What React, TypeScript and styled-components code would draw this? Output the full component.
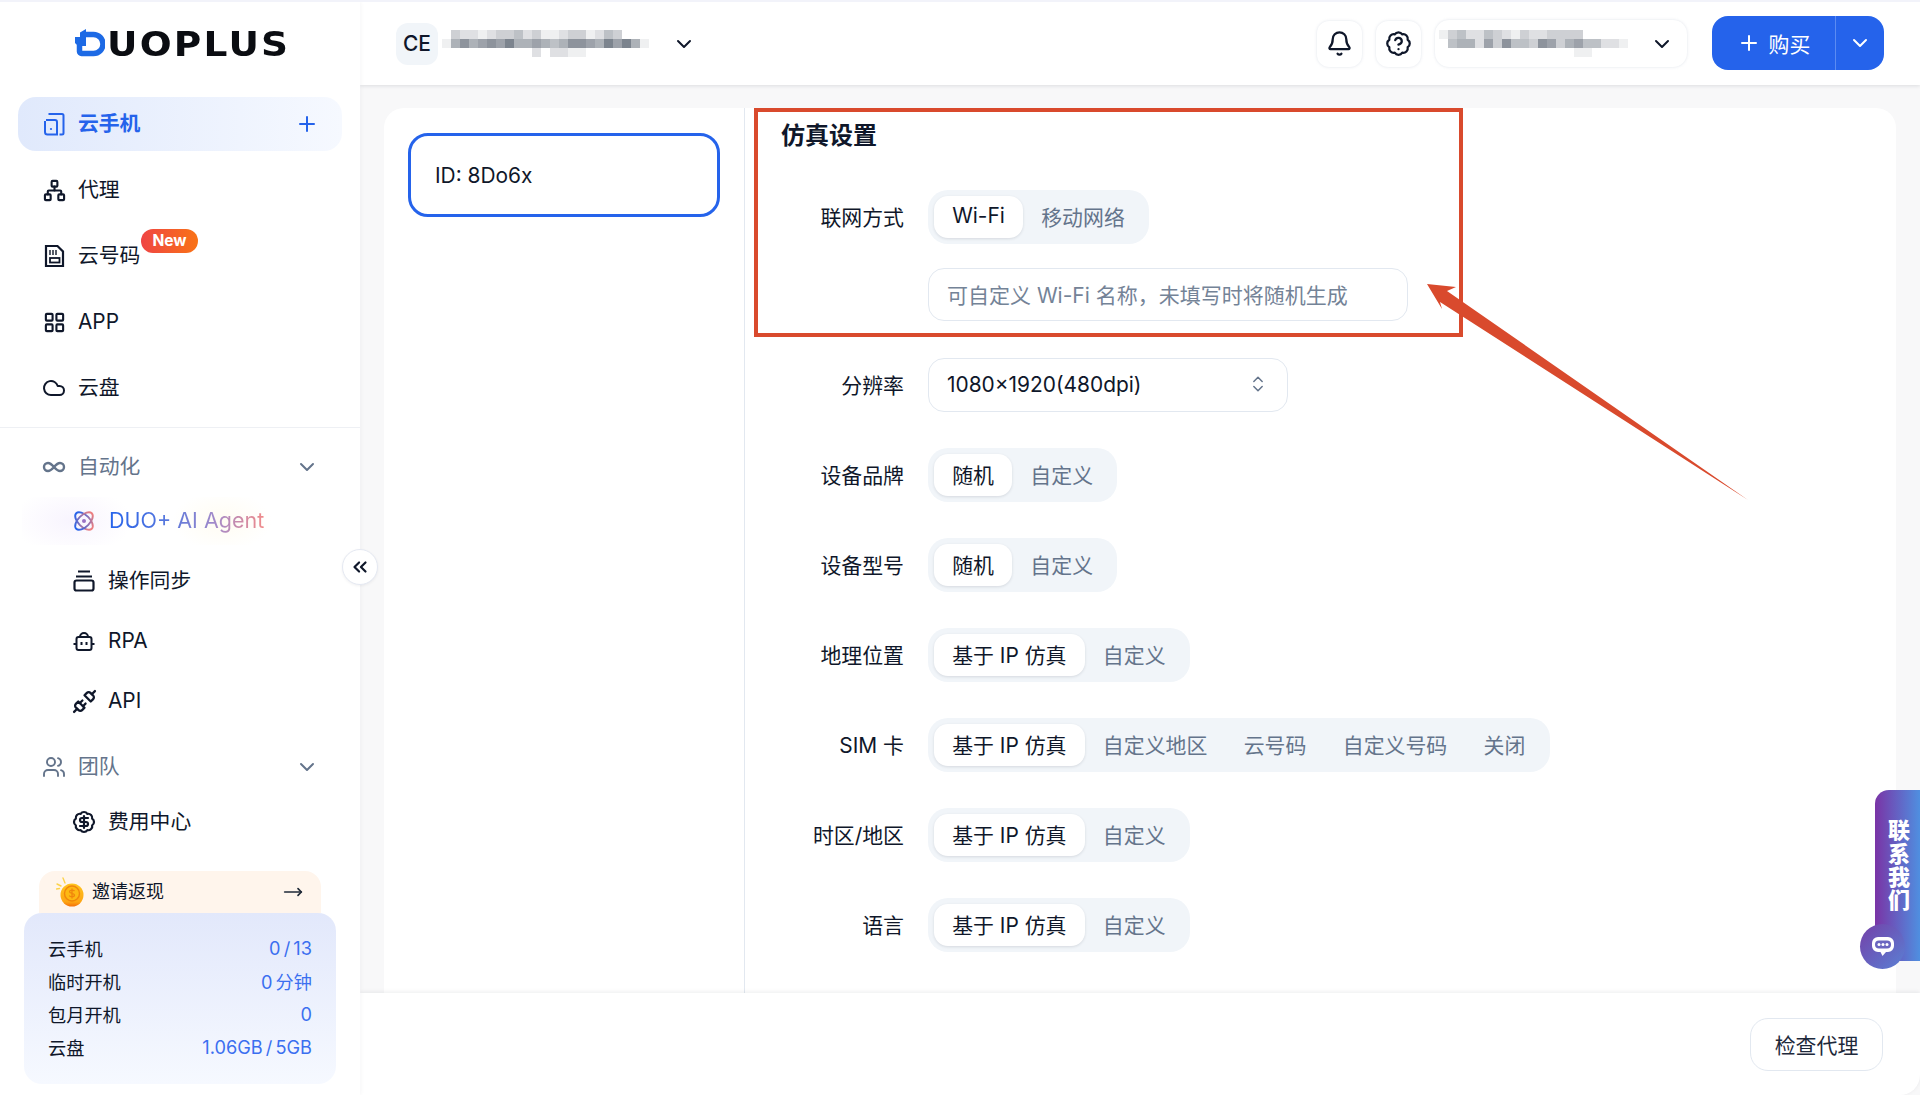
import React from 'react';
import styled, { createGlobalStyle } from 'styled-components';
import {
  BadgeDollarSign,
  BadgeHelp,
  Bell,
  ChevronDown,
  ChevronsLeft,
  ChevronsUpDown,
  Cloud,
  Infinity as InfinityIcon,
  LayoutGrid,
  MoveRight,
  Network,
  Plus,
  Unplug,
  Users,
} from 'lucide-react';

const settingRows = [
  { label: '分辨率', select: '1080×1920(480dpi)' },
  { label: '设备品牌', tabs: ['随机', '自定义'] },
  { label: '设备型号', tabs: ['随机', '自定义'] },
  { label: '地理位置', tabs: ['基于 IP 仿真', '自定义'] },
  { label: 'SIM 卡', tabs: ['基于 IP 仿真', '自定义地区', '云号码', '自定义号码', '关闭'] },
  { label: '时区/地区', tabs: ['基于 IP 仿真', '自定义'] },
  { label: '语言', tabs: ['基于 IP 仿真', '自定义'] },
];

const stats = [
  { name: '云手机', value: '0 / 13' },
  { name: '临时开机', value: '0 分钟' },
  { name: '包月开机', value: '0' },
  { name: '云盘', value: '1.06GB / 5GB' },
];

// mosaic cells for the blurred account names, one string per row, digit = darkness
const workspaceMosaic = [
  '.3221233423112331243',
  '15756768556545776586851',
  '..........2.2211',
];
const accountMosaic = [
  '1342243213223333',
  '.45526374437635644221',
  '...............11',
];

const Mosaic = ({ rows, width }: { rows: string[]; width: number }) => (
  <svg width={width} height={27} viewBox={`0 0 ${width} 27`}>
    {rows.map((row, y) =>
      row.split('').map((cell, x) =>
        cell === '.' ? null : (
          <rect
            key={`${y}-${x}`}
            x={x * 9}
            y={y * 9}
            width={9}
            height={9}
            fill="#4b5563"
            opacity={Number(cell) / 11}
          />
        ),
      ),
    )}
  </svg>
);

const PhoneIcon = () => (
  <svg width="22" height="24" viewBox="0 0 22 24" fill="none" stroke="#2563eb" strokeWidth="2">
    <path d="M2 9v11a2.5 2.5 0 0 0 2.5 2.5H14V10a2 2 0 0 0-2-2H3" />
    <path d="M5.5 2H19a1.5 1.5 0 0 1 1.5 1.5v17.500a1.500 1.500 0 0 1-1.500 1.500h-2.500" />
    <circle cx="8" cy="17" r="1.100" fill="#2563eb" stroke="none" />
  </svg>
);

const SimIcon = () => (
  <svg width="22" height="24" viewBox="0 0 22 24" fill="none" stroke="#0f172a" strokeWidth="2.200">
    <path d="M3 2h11.500L20 7.500V22H3z" />
    <path d="M7 6v5M10 6v5M13 6v5" strokeWidth="1.400" />
    <rect x="7" y="14" width="9.500" height="4.500" strokeWidth="1.800" />
  </svg>
);

const AtomIcon = () => (
  <svg width="22" height="22" viewBox="0 0 22 22" fill="none" strokeWidth="1.900">
    <defs>
      <linearGradient id="atomStroke" x1="0" y1="0" x2="1" y2="0">
        <stop offset="0" stopColor="#2563eb" />
        <stop offset="1" stopColor="#ee7f7f" />
      </linearGradient>
    </defs>
    <g stroke="url(#atomStroke)">
      <ellipse cx="11" cy="11" rx="11" ry="5.800" transform="rotate(45 11 11)" />
      <ellipse cx="11" cy="11" rx="11" ry="5.800" transform="rotate(-45 11 11)" />
    </g>
    <circle cx="11" cy="11" r="2" fill="#9a72c4" />
  </svg>
);

const SyncIcon = () => (
  <svg width="22" height="22" viewBox="0 0 22 22" fill="none" stroke="#0f172a" strokeWidth="2.200">
    <path d="M5 1.500h12M3 6.500h16" />
    <rect x="1.500" y="10.500" width="19" height="10" rx="2" />
  </svg>
);

const BotIcon = () => (
  <svg width="22" height="22" viewBox="0 0 22 22" fill="none" stroke="#0f172a" strokeWidth="2">
    <path d="M7 7a4 4 0 0 1 8 0" />
    <rect x="3.500" y="7" width="15" height="13" rx="2" />
    <path d="M0.500 14h3M18.500 14h3M8.500 12v3M13.500 12v3" />
  </svg>
);

const CoinIcon = () => (
  <svg width="28" height="30" viewBox="0 0 28 30">
    <defs>
      <linearGradient id="coinFill" x1="0" y1="0" x2="0" y2="1">
        <stop offset="0" stopColor="#ffc51f" />
        <stop offset="0.800" stopColor="#fda513" />
        <stop offset="1" stopColor="#f4700c" />
      </linearGradient>
    </defs>
    <path d="M7 1l2 5M1 7l4 2M0.500 12l3-.500" stroke="#fcd34d" strokeWidth="1.400" strokeLinecap="round" />
    <circle cx="16" cy="18" r="11.500" fill="url(#coinFill)" />
    <circle cx="16" cy="16.500" r="7.500" fill="#fdb813" stroke="#f0860c" strokeWidth="1.400" />
    <path d="M18.500 14c-1-1.200-5-1.200-5 .8s5 1 5 3.200-4 2.200-5.300.6M16 11.500v10" fill="none" stroke="#f0860c" strokeWidth="1.300" />
  </svg>
);

const ChatIcon = () => (
  <svg width="24" height="22" viewBox="0 0 24 22">
    <path d="M7 1h10a6 6 0 0 1 6 6v3a6 6 0 0 1-6 6h-2l-3.500 4-2-4H7a6 6 0 0 1-6-6V7a6 6 0 0 1 6-6z" fill="#fff" />
    <rect x="4" y="4.500" width="16" height="8" rx="4" fill="#6a66c0" />
    <circle cx="8" cy="8.500" r="1.500" fill="#fff" />
    <circle cx="12" cy="8.500" r="1.500" fill="#fff" />
    <circle cx="16" cy="8.500" r="1.500" fill="#fff" />
  </svg>
);

const LogoMark = () => (
  <svg width="30" height="28" viewBox="0 0 30 28">
    <path d="M11 0v17H3L0 14V8h5V3.500z" fill="#1d6ae5" />
    <path
      d="M9 5.500h9.500a9.500 9.500 0 0 1 0 19H6.500a2 2 0 0 1-2-2V16"
      fill="none"
      stroke="#1d6ae5"
      strokeWidth="5.500"
    />
  </svg>
);

const App = () => (
  <>
    <GlobalStyle />
    <Page>
      <Sidebar>
        <Logo>
          <LogoMark />
          <LogoText>UOPLUS</LogoText>
        </Logo>

        <NavTop>
          <NavItem $active>
            <PhoneIcon />
            <NavLabel $bold>云手机</NavLabel>
            <NavEnd>
              <Plus size={24} strokeWidth={2} color="#2563eb" />
            </NavEnd>
          </NavItem>
          <NavItem>
            <Network size={23} strokeWidth={2.2} />
            <NavLabel>代理</NavLabel>
          </NavItem>
          <NavItem>
            <SimIcon />
            <NavLabel>
              云号码
              <NewBadge>New</NewBadge>
            </NavLabel>
          </NavItem>
          <NavItem>
            <LayoutGrid size={23} strokeWidth={2.2} />
            <NavLabel>APP</NavLabel>
          </NavItem>
          <NavItem>
            <Cloud size={24} strokeWidth={2} />
            <NavLabel>云盘</NavLabel>
          </NavItem>
        </NavTop>

        <NavDivider />

        <NavGroup>
          <NavItem $muted>
            <InfinityIcon size={24} strokeWidth={2.4} />
            <NavLabel>自动化</NavLabel>
            <NavEnd>
              <ChevronDown size={24} strokeWidth={2} />
            </NavEnd>
          </NavItem>
          <SubList>
            <AgentItem>
              <AtomIcon />
              <AgentLabel>DUO+ AI Agent</AgentLabel>
            </AgentItem>
            <SubItem>
              <SyncIcon />
              <NavLabel>操作同步</NavLabel>
            </SubItem>
            <SubItem>
              <BotIcon />
              <NavLabel>RPA</NavLabel>
            </SubItem>
            <SubItem>
              <Unplug size={25} strokeWidth={2.2} />
              <NavLabel>API</NavLabel>
            </SubItem>
          </SubList>
          <TeamHeader $muted>
            <Users size={24} strokeWidth={1.900} />
            <NavLabel>团队</NavLabel>
            <NavEnd>
              <ChevronDown size={24} strokeWidth={2} />
            </NavEnd>
          </TeamHeader>
          <FeeItem>
            <BadgeDollarSign size={24} strokeWidth={2.200} />
            <NavLabel>费用中心</NavLabel>
          </FeeItem>
        </NavGroup>

        <Promo>
          <InviteBanner>
            <CoinIcon />
            <InviteText>邀请返现</InviteText>
            <MoveRight size={20} strokeWidth={2} color="#1f2937" />
          </InviteBanner>
          <StatsCard>
            {stats.map((stat) => (
              <StatRow key={stat.name}>
                <span>{stat.name}</span>
                <StatValue>{stat.value}</StatValue>
              </StatRow>
            ))}
          </StatsCard>
        </Promo>

        <CollapseButton>
          <ChevronsLeft size={22} strokeWidth={2.400} color="#0f172a" />
        </CollapseButton>
      </Sidebar>

      <Main>
        <Header>
          <WorkspaceChip>CE</WorkspaceChip>
          <Mosaic rows={workspaceMosaic} width={212} />
          <WorkspaceChevron>
            <ChevronDown size={24} strokeWidth={2} color="#0f172a" />
          </WorkspaceChevron>
          <HeaderRight>
            <IconButton>
              <Bell size={27} strokeWidth={2} />
            </IconButton>
            <IconButton>
              <BadgeHelp size={27} strokeWidth={2} />
            </IconButton>
            <AccountSelect>
              <Mosaic rows={accountMosaic} width={190} />
              <ChevronDown size={24} strokeWidth={2} color="#0f172a" />
            </AccountSelect>
            <BuyButton>
              <BuyMain>
                <Plus size={24} strokeWidth={2} />
                购买
              </BuyMain>
              <BuyMore>
                <ChevronDown size={24} strokeWidth={2} />
              </BuyMore>
            </BuyButton>
          </HeaderRight>
        </Header>

        <Content>
          <Card>
            <DeviceColumn>
              <DeviceCard>ID: 8Do6x</DeviceCard>
            </DeviceColumn>
            <FormColumn>
              <FormTitle>仿真设置</FormTitle>
              <NetworkBlock>
                <FormRow>
                  <FormLabel>联网方式</FormLabel>
                  <TabGroup>
                    <Tab $selected>Wi-Fi</Tab>
                    <Tab>移动网络</Tab>
                  </TabGroup>
                </FormRow>
                <WifiInput>可自定义 Wi-Fi 名称，未填写时将随机生成</WifiInput>
              </NetworkBlock>
              <SettingList>
                {settingRows.map((row) => (
                  <FormRow key={row.label}>
                    <FormLabel>{row.label}</FormLabel>
                    {row.select ? (
                      <SelectBox>
                        {row.select}
                        <ChevronsUpDown size={20} strokeWidth={1.800} color="#64748b" />
                      </SelectBox>
                    ) : (
                      <TabGroup>
                        {row.tabs?.map((tab, index) => (
                          <Tab key={tab} $selected={index === 0}>
                            {tab}
                          </Tab>
                        ))}
                      </TabGroup>
                    )}
                  </FormRow>
                ))}
              </SettingList>
            </FormColumn>
          </Card>
        </Content>

        <Footer>
          <CheckButton>检查代理</CheckButton>
        </Footer>
      </Main>

      <RedBox />
      <Arrow viewBox="0 0 340 230" width="340" height="230">
        <polygon points="7,4 36,7 27,11 328,220 20,22 22,29" fill="#d94a2d" />
      </Arrow>

      <ContactTab>
        <ContactText>联系我们</ContactText>
        <ContactBubble>
          <ChatIcon />
        </ContactBubble>
      </ContactTab>
    </Page>
  </>
);

export default App;

const GlobalStyle = createGlobalStyle`
  html, body {
    margin: 0;
    padding: 0;
    background: #f8f8f9;
  }
  * {
    box-sizing: border-box;
  }
  body {
    font-family: Inter, "Noto Sans CJK SC", sans-serif;
    font-size: 20.9px;
    color: #0f172a;
  }
`;

const Page = styled.div`
  position: relative;
  display: flex;
  width: 1920px;
  height: 1095px;
  overflow: hidden;
  border-top: 2px solid #f2f3fa;
`;

const Sidebar = styled.aside`
  position: relative;
  z-index: 2;
  flex: 0 0 360px;
  display: flex;
  flex-direction: column;
  background: #fff;
  padding: 0 18px;
  box-shadow: 1px 0 4px rgba(15, 23, 42, 0.04);
`;

const Logo = styled.div`
  display: flex;
  align-items: center;
  height: 82px;
  margin-bottom: 13px;
  padding-left: 57px;
  gap: 2px;
`;

const LogoText = styled.span`
  display: inline-block;
  margin-top: 4px;
  font-family: "DejaVu Sans", sans-serif;
  font-weight: 700;
  font-size: 33.5px;
  letter-spacing: 2px;
  line-height: 1;
  color: #0b0d12;
  transform: scaleX(1.12);
  transform-origin: left center;
`;

const NavTop = styled.nav`
  display: flex;
  flex-direction: column;
  gap: 12px;
`;

const NavItem = styled.div<{ $active?: boolean; $muted?: boolean }>`
  display: grid;
  grid-template-columns: 22px 1fr auto;
  align-items: center;
  column-gap: 13px;
  height: 54px;
  padding: 0 23px 0 25px;
  border-radius: 18px;
  background: ${(p) => (p.$active ? 'linear-gradient(90deg, #e0e9fc, #f6f9ff)' : 'transparent')};
  color: ${(p) => (p.$active ? '#2563eb' : p.$muted ? '#64748b' : '#0f172a')};

  > svg {
    justify-self: center;
  }
`;

const NavLabel = styled.span<{ $bold?: boolean }>`
  position: relative;
  font-size: 20.8px;
  font-weight: ${(p) => (p.$bold ? 700 : 400)};
  line-height: 1;
`;

const NavEnd = styled.span`
  display: flex;
`;

const NewBadge = styled.span`
  position: absolute;
  left: 63px;
  top: -17px;
  width: 57px;
  height: 24px;
  border-radius: 12px;
  background: linear-gradient(90deg, #ef4444, #f97316);
  color: #fff;
  font-size: 15.6px;
  font-weight: 700;
  line-height: 23px;
  text-align: center;
`;

const NavDivider = styled.div`
  height: 1px;
  margin: 12px -18px;
  background: #eef0f4;
`;

const NavGroup = styled.div`
  display: flex;
  flex-direction: column;
`;

const SubList = styled.div`
  display: flex;
  flex-direction: column;
  gap: 12px;
  margin-top: 3px;
`;

const SubItem = styled.div`
  display: grid;
  grid-template-columns: 22px 1fr;
  align-items: center;
  column-gap: 13px;
  height: 48px;
  padding-left: 55px;

  > svg {
    justify-self: center;
  }
`;

const AgentItem = styled(SubItem)`
  margin-left: 4px;
  padding-left: 51px;
  background:
    radial-gradient(ellipse 60px 34px at 50px 50%, #f8f4fe, transparent),
    radial-gradient(ellipse 50px 30px at 200px 50%, #fffcf2, transparent);
`;

const AgentLabel = styled.span`
  justify-self: start;
  margin-left: 1px;
  background: linear-gradient(90deg, #2563eb 0%, #5a78dc 40%, #a78bc8 70%, #f08a8a 100%);
  -webkit-background-clip: text;
  background-clip: text;
  color: transparent;
  font-size: 21.5px;
  line-height: 1.3;
`;

const TeamHeader = styled(NavItem)`
  margin-top: 15px;
`;

const FeeItem = styled(SubItem)`
  margin-top: 4px;
`;

const Promo = styled.div`
  display: flex;
  flex-direction: column;
  margin: auto 6px 11px;
`;

const InviteBanner = styled.div`
  display: flex;
  align-items: center;
  height: 42px;
  margin: 0 15px;
  padding: 0 18px 0 17px;
  border-radius: 16px 16px 0 0;
  background: #fff5ec;
`;

const InviteText = styled.span`
  flex: 1;
  margin-left: 8px;
  font-size: 18px;
  line-height: 1;
  color: #0f172a;
`;

const StatsCard = styled.div`
  display: flex;
  flex-direction: column;
  height: 171px;
  padding: 18px 24px;
  border-radius: 18px;
  background: linear-gradient(180deg, #e2e8fb, #f6f9ff);
`;

const StatRow = styled.div`
  display: flex;
  justify-content: space-between;
  align-items: center;
  height: 33px;
  font-size: 18.2px;
`;

const StatValue = styled.span`
  color: #3b6ff0;
  word-spacing: -2px;
`;

const CollapseButton = styled.button`
  position: absolute;
  left: 342px;
  top: 547px;
  width: 36px;
  height: 36px;
  padding: 0;
  display: flex;
  align-items: center;
  justify-content: center;
  border: 1px solid #e5e9f2;
  border-radius: 50%;
  background: #fff;
  box-shadow: 0 1px 3px rgba(15, 23, 42, 0.06);
`;

const Main = styled.main`
  flex: 1;
  min-width: 0;
  display: flex;
  flex-direction: column;
`;

const Header = styled.header`
  position: relative;
  z-index: 1;
  flex: 0 0 83px;
  display: flex;
  align-items: center;
  padding: 0 36px 0 36px;
  background: #fff;
  box-shadow: 0 1px 4px rgba(15, 23, 42, 0.12);
`;

const WorkspaceChip = styled.div`
  width: 42px;
  height: 42px;
  margin-right: 4px;
  border-radius: 12px;
  background: #f1f5f9;
  font-weight: 500;
  line-height: 42px;
  text-align: center;
`;

const WorkspaceChevron = styled.span`
  display: flex;
  margin-left: 18px;
`;

const HeaderRight = styled.div`
  display: flex;
  align-items: center;
  margin-left: auto;
`;

const IconButton = styled.div`
  display: flex;
  align-items: center;
  justify-content: center;
  width: 45px;
  height: 46px;
  margin-right: 14px;
  border-radius: 12px;
  box-shadow: 0 0 3px rgba(148, 163, 184, 0.3);
`;

const AccountSelect = styled.div`
  display: flex;
  align-items: center;
  justify-content: space-between;
  width: 252px;
  height: 47px;
  padding: 0 13px 0 4px;
  border-radius: 14px;
  box-shadow: 0 0 3px rgba(148, 163, 184, 0.3);
`;

const BuyButton = styled.div`
  display: flex;
  width: 172px;
  height: 54px;
  margin: 0 0 1px 25px;
  border-radius: 16px;
  overflow: hidden;
  background: #2563eb;
  color: #fff;
`;

const BuyMain = styled.div`
  flex: 1;
  display: flex;
  align-items: center;
  justify-content: center;
  gap: 8px;
  border-right: 1px solid #5b8bf2;
`;

const BuyMore = styled.div`
  display: flex;
  align-items: center;
  justify-content: center;
  width: 48px;
`;

const Content = styled.div`
  flex: 1;
  min-height: 0;
  padding: 23px 24px 0;
`;

const Card = styled.section`
  display: flex;
  height: 100%;
  background: #fff;
  border-radius: 20px 20px 0 0;
`;

const DeviceColumn = styled.div`
  flex: 0 0 361px;
  padding: 25px 24px;
  border-right: 1px solid #e2e8f0;
`;

const DeviceCard = styled.div`
  display: flex;
  align-items: center;
  height: 84px;
  padding-left: 24px;
  border: 3px solid #2563eb;
  border-radius: 20px;
`;

const FormColumn = styled.div`
  flex: 1;
  display: flex;
  flex-direction: column;
`;

const FormTitle = styled.h2`
  margin: 0;
  height: 82px;
  padding: 12px 0 0 36px;
  font-size: 24px;
  font-weight: 700;
  line-height: 32px;
`;

const NetworkBlock = styled.div`
  display: flex;
  flex-direction: column;
  gap: 24px;
`;

const SettingList = styled.div`
  display: flex;
  flex-direction: column;
  gap: 36px;
  margin-top: 37px;
`;

const FormRow = styled.div`
  display: flex;
  align-items: center;
  gap: 23px;
`;

const FormLabel = styled.label`
  flex: 0 0 160px;
  padding: 0 1px 3px 0;
  text-align: right;
`;

const TabGroup = styled.div`
  display: flex;
  height: 54px;
  padding: 6px;
  border-radius: 20px;
  background: #f1f5f9;
`;

const Tab = styled.div<{ $selected?: boolean }>`
  display: flex;
  align-items: center;
  padding: 0 18.2px 3px;
  border-radius: 14px;
  white-space: nowrap;
  background: ${(p) => (p.$selected ? '#fff' : 'transparent')};
  color: ${(p) => (p.$selected ? '#0f172a' : '#64748b')};
  box-shadow: ${(p) => (p.$selected ? '0 1px 3px rgba(15, 23, 42, 0.12)' : 'none')};
`;

const FieldBox = styled.div`
  display: flex;
  align-items: center;
  height: 54px;
  margin-left: 183px;
  padding: 0 18px 2px;
  border: 1px solid #e2e8f0;
  border-radius: 16px;
  background: #fff;
`;

const WifiInput = styled(FieldBox)`
  width: 480px;
  height: 53px;
  font-size: 21px;
  color: #748397;
`;

const SelectBox = styled(FieldBox)`
  justify-content: space-between;
  width: 360px;
  margin-left: 0;
  padding-right: 19px;
`;

const Footer = styled.footer`
  position: relative;
  z-index: 1;
  flex: 0 0 102px;
  display: flex;
  align-items: flex-end;
  justify-content: flex-end;
  padding: 0 37px 24px 0;
  background: #fff;
  border-radius: 0 0 20px 0;
  box-shadow: 0 -1px 4px rgba(15, 23, 42, 0.08);
`;

const CheckButton = styled.button`
  width: 133px;
  height: 53px;
  padding: 0 0 2px;
  border: 1px solid #e2e8f0;
  border-radius: 18px;
  background: #fff;
  font: inherit;
  color: #1e293b;
`;

const RedBox = styled.div`
  position: absolute;
  left: 754px;
  top: 106px;
  width: 709px;
  height: 229px;
  border: 4px solid #d94a2d;
  z-index: 3;
`;

const Arrow = styled.svg`
  position: absolute;
  left: 1420px;
  top: 278px;
  z-index: 4;
`;

const ContactTab = styled.div`
  position: absolute;
  z-index: 5;
  left: 1875px;
  top: 788px;
  width: 45px;
  height: 171px;
  border-radius: 14px 0 0 14px;
  background: linear-gradient(90deg, #7a34a6, #4f8fe0);
`;

const ContactText = styled.div`
  position: absolute;
  left: 11px;
  top: 29px;
  writing-mode: vertical-rl;
  font-size: 22px;
  font-weight: 900;
  letter-spacing: 1.200px;
  line-height: 22px;
  color: #fff;
`;

const ContactBubble = styled.div`
  position: absolute;
  left: -15px;
  top: 134px;
  width: 45px;
  height: 45px;
  display: flex;
  align-items: center;
  justify-content: center;
  border-radius: 50%;
  background: linear-gradient(135deg, #7440a8, #5a80d4);
`;
